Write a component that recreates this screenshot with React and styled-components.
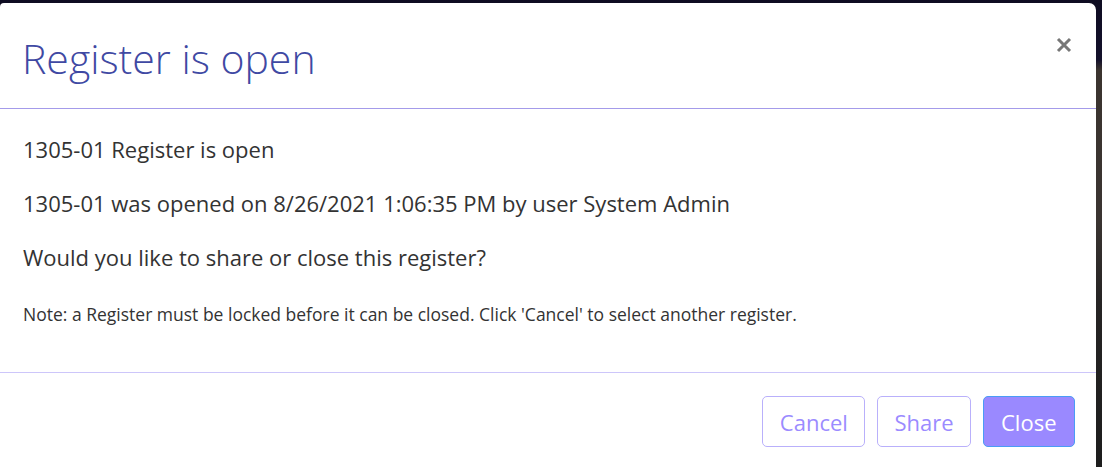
import React from "react";
import styled, { createGlobalStyle } from "styled-components";

const GlobalStyle = createGlobalStyle`
  html, body {
    margin: 0;
    padding: 0;
    height: 100%;
  }
  body {
    font-family: "Open Sans", "Liberation Sans", sans-serif;
    background: linear-gradient(
      to bottom,
      #0e0c22 0px,
      #14112b 60px,
      #3b342f 70px,
      #3a3431 220px,
      #262424 300px,
      #1d1d1d 467px
    );
    overflow: hidden;
  }
`;

const Backdrop = styled.div`
  padding-top: 3px;
  height: 464px;
`;

const Modal = styled.div`
  width: 1096px;
  height: 480px;
  background: #ffffff;
  border-radius: 4px 7px 0 0;
  display: flex;
  flex-direction: column;
`;

const Header = styled.div`
  height: 106px;
  flex-shrink: 0;
  box-sizing: border-box;
  padding: 0 23px 0 22px;
  display: flex;
  align-items: center;
  justify-content: space-between;
  border-bottom: 1px solid #a49bea;
`;

const Title = styled.h1`
  margin: 0;
  margin-top: 4px;
  font-size: 41px;
  font-weight: 300;
  color: #3f49a3;
`;

const CloseX = styled.button`
  border: none;
  background: none;
  padding: 0;
  margin-top: -22px;
  width: 18px;
  height: 18px;
  cursor: pointer;
  display: flex;
  align-items: center;
  justify-content: center;
`;

const Body = styled.div`
  padding: 24px 23px 0;
  height: 264px;
  flex-shrink: 0;
  box-sizing: border-box;
  border-bottom: 1px solid #cdc6fa;
  color: #333333;
`;

const Line = styled.p`
  margin: 0 0 ${(p) => (p.$last ? 0 : 21)}px;
  font-size: 22px;
  line-height: 33px;
`;

const Note = styled.p`
  margin: 28px 0 0;
  font-size: 17.5px;
  line-height: 24px;
  color: #333333;
`;

const Footer = styled.div`
  display: flex;
  justify-content: flex-end;
  gap: 11.5px;
  padding: 23px 21px 0 0;
`;

const Button = styled.button`
  font-family: "Open Sans", "Liberation Sans", sans-serif;
  font-size: 22px;
  height: 51px;
  padding: 0 ${(p) => (p.$primary ? 17.5 : 16.5)}px;
  border-radius: 5px;
  cursor: pointer;
  color: ${(p) => (p.$primary ? "#ffffff" : "#9b8bff")};
  background: ${(p) => (p.$primary ? "#9a89ff" : "#ffffff")};
  border: 1px solid ${(p) => (p.$primary ? "#4a9cf5" : "#b9b0fb")};
`;

export default function App() {
  return (
    <>
      <GlobalStyle />
      <Backdrop>
        <Modal>
          <Header>
            <Title>Register is open</Title>
            <CloseX aria-label="close">
              <svg width="16" height="16" viewBox="0 0 16 16">
                <path
                  d="M2 2 L14 14 M14 2 L2 14"
                  stroke="#777777"
                  strokeWidth="3"
                />
              </svg>
            </CloseX>
          </Header>
          <Body>
            <Line>1305-01 Register is open</Line>
            <Line>1305-01 was opened on 8/26/2021 1:06:35 PM by user System Admin</Line>
            <Line $last>Would you like to share or close this register?</Line>
            <Note>
              Note: a Register must be locked before it can be closed. Click 'Cancel' to select another register.
            </Note>
          </Body>
          <Footer>
            <Button>Cancel</Button>
            <Button>Share</Button>
            <Button $primary>Close</Button>
          </Footer>
        </Modal>
      </Backdrop>
    </>
  );
}
